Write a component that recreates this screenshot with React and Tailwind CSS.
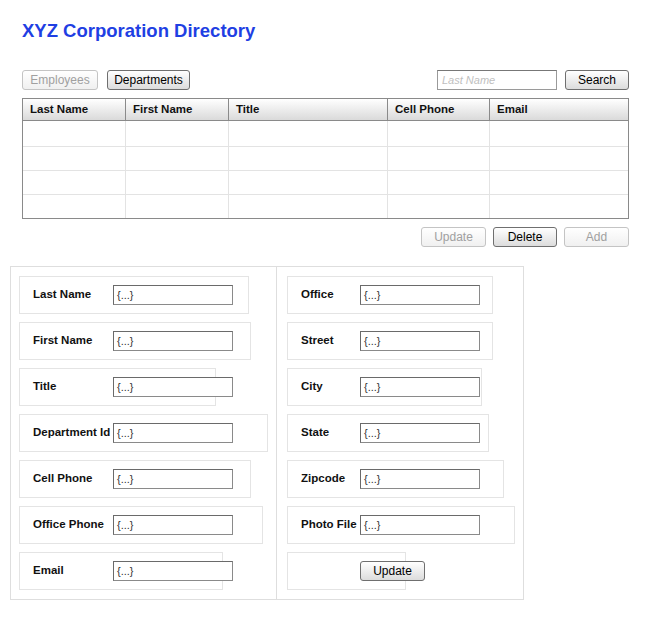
import { useState } from "react"

const LEFT_FIELDS = [
    { label: "Last Name", box: "w-[230px]" },
    { label: "First Name", box: "w-[232px]" },
    { label: "Title", box: "w-[197px]" },
    { label: "Department Id", box: "w-[249px]" },
    { label: "Cell Phone", box: "w-[232px]" },
    { label: "Office Phone", box: "w-[244px]" },
    { label: "Email", box: "w-[204px]" },
]

const RIGHT_FIELDS = [
    { label: "Office", box: "w-[206px]" },
    { label: "Street", box: "w-[206px]" },
    { label: "City", box: "w-[195px]" },
    { label: "State", box: "w-[202px]" },
    { label: "Zipcode", box: "w-[217px]" },
    { label: "Photo File", box: "w-[228px]" },
]

const COLUMNS = ["Last Name", "First Name", "Title", "Cell Phone", "Email"]

function Button({ label, disabled = false, className = "" }) {
    return (
        <button
            type="button"
            disabled={disabled}
            className={
                "h-5 rounded-[3px] border text-[12px] leading-none bg-gradient-to-b " +
                (disabled
                    ? "border-[#c4c4c4] text-[#a0a0a0] from-white to-[#f0f0f0] "
                    : "border-[#6f6f6f] text-black from-white to-[#dcdcdc] ") +
                className
            }
        >
            {label}
        </button>
    )
}

function Field({ label, box, labelWidth, value }) {
    return (
        <div className={"h-[38px] flex items-center border border-[#e4e4e4] pl-[13px] " + box}>
            <span className={"shrink-0 whitespace-nowrap font-bold text-[11.5px] text-[#111] " + labelWidth}>{label}</span>
            <div className="shrink-0 w-[120px] h-5 flex items-center pl-[3px] border border-[#8a8a8a] border-t-[#6a6a6a] border-l-[#6a6a6a] bg-white text-[11px] text-[#333]">
                {value}
            </div>
        </div>
    )
}

export default function App() {
    const [lastName, SetLastName] = useState("")

    return (
        <div className="w-[650px] h-[627px] bg-white font-['Liberation_Sans',Arial,sans-serif]">
            <div className="pl-[22px] pr-[21px] pt-[19px]">
                <h1 className="text-[18.5px] leading-[24px] font-bold text-[#1f3fe3]">XYZ Corporation Directory</h1>

                {/* toolbar */}
                <div className="mt-[27px] flex items-center">
                    <Button label="Employees" disabled className="w-[76px]" />
                    <Button label="Departments" className="w-[83px] ml-[9px]" />
                    <input
                        value={lastName}
                        onChange={(e) => SetLastName(e.target.value)}
                        placeholder="Last Name"
                        className="ml-auto w-[120px] h-5 px-[4px] border border-[#9a9a9a] border-t-[#777] text-[11px] placeholder:italic placeholder:text-[#c0c0c0] outline-none"
                    />
                    <Button label="Search" className="w-[64px] ml-[8px]" />
                </div>

                {/* table */}
                <div className="mt-[8px] w-[607px] border border-[#8a8a8a]">
                    <div className="grid grid-cols-[103px_103px_159px_102px_1fr] h-[22px] border-b border-[#8a8a8a] bg-gradient-to-b from-white to-[#dadada]">
                        {COLUMNS.map((c, i) => (
                            <div
                                key={c}
                                className={"flex items-center pl-[7px] font-bold text-[11.5px] text-[#111] " + (i < 4 ? "border-r border-[#8a8a8a]" : "")}
                            >
                                {c}
                            </div>
                        ))}
                    </div>
                    {["h-[25px]", "h-[24px]", "h-[24px]", "h-[24px]"].map((h, r) => (
                        <div
                            key={r}
                            className={"grid grid-cols-[103px_103px_159px_102px_1fr] " + h + (r > 0 ? " border-t border-[#e3e3e3]" : "")}
                        >
                            {COLUMNS.map((c, i) => (
                                <div key={c} className={i < 4 ? "border-r border-[#e3e3e3]" : ""}></div>
                            ))}
                        </div>
                    ))}
                </div>

                <div className="mt-[8px] flex justify-end gap-[7px]">
                    <Button label="Update" disabled className="w-[65px]" />
                    <Button label="Delete" className="w-[64px]" />
                    <Button label="Add" disabled className="w-[65px]" />
                </div>
            </div>

            {/* detail form */}
            <div className="mt-[19px] ml-[10px] flex">
                <div className="w-[267px] border border-[#dedede] pl-[8px] pt-[9px] pb-[9px] flex flex-col gap-[8px]">
                    {LEFT_FIELDS.map((f) => (
                        <Field key={f.label} label={f.label} box={f.box} labelWidth="w-[80px]" value="{...}" />
                    ))}
                </div>
                <div className="w-[247px] border border-l-0 border-[#dedede] pl-[10px] pt-[9px] pb-[9px] flex flex-col gap-[8px]">
                    {RIGHT_FIELDS.map((f) => (
                        <Field key={f.label} label={f.label} box={f.box} labelWidth="w-[59px]" value="{...}" />
                    ))}
                    <div className="h-[38px] w-[119px] flex items-center border border-[#e4e4e4] pl-[72px]">
                        <Button label="Update" className="shrink-0 w-[65px]" />
                    </div>
                </div>
            </div>
        </div>
    )
}
